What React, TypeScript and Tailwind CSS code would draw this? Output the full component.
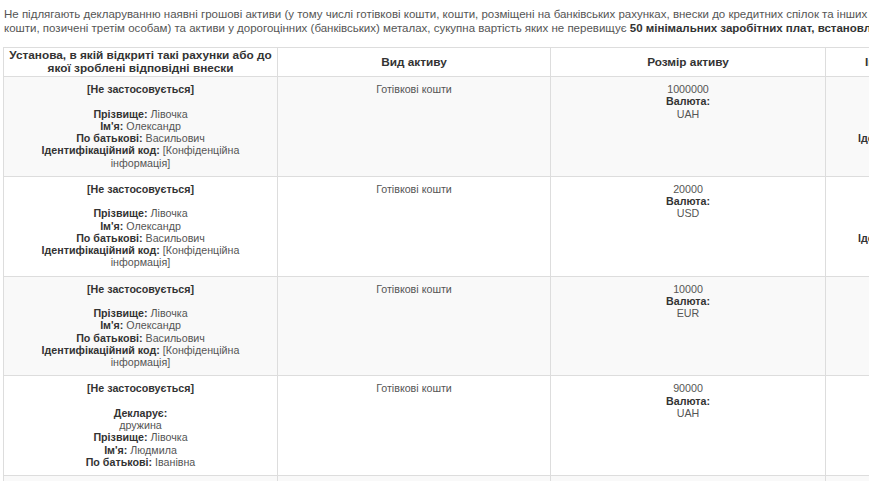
import React from 'react'

type Person = {
  declarant?: string
  surname: string
  name: string
  patronymic: string
  code?: boolean
}

type Row = {
  person: Person
  kind: string
  amount: string
  currency: string
  owner?: boolean
}

const ROWS: Row[] = [
  {
    person: { surname: 'Лівочка', name: 'Олександр', patronymic: 'Васильович', code: true },
    kind: 'Готівкові кошти',
    amount: '1000000',
    currency: 'UAH',
    owner: true,
  },
  {
    person: { surname: 'Лівочка', name: 'Олександр', patronymic: 'Васильович', code: true },
    kind: 'Готівкові кошти',
    amount: '20000',
    currency: 'USD',
    owner: true,
  },
  {
    person: { surname: 'Лівочка', name: 'Олександр', patronymic: 'Васильович', code: true },
    kind: 'Готівкові кошти',
    amount: '10000',
    currency: 'EUR',
  },
  {
    person: { declarant: 'дружина', surname: 'Лівочка', name: 'Людмила', patronymic: 'Іванівна' },
    kind: 'Готівкові кошти',
    amount: '90000',
    currency: 'UAH',
  },
  {
    person: { surname: 'Лівочка', name: 'Людмила', patronymic: 'Іванівна' },
    kind: 'Готівкові кошти',
    amount: '5000',
    currency: 'USD',
  },
]

const Label = ({ children }: { children: React.ReactNode }) => (
  <b className="font-bold text-[#333]">{children}</b>
)

const PersonCell = ({ p }: { p: Person }) => (
  <>
    <Label>[Не застосовується]</Label>
    <br />
    <br />
    {p.declarant && (
      <>
        <Label>Декларує:</Label>
        <br />
        {p.declarant}
        <br />
      </>
    )}
    <Label>Прізвище:</Label> {p.surname}
    <br />
    <Label>Ім'я:</Label> {p.name}
    <br />
    <Label>По батькові:</Label> {p.patronymic}
    {p.code && (
      <>
        <br />
        <Label>Ідентифікаційний код:</Label> [Конфіденційна інформація]
      </>
    )}
  </>
)

const OwnerCell = () => (
  <>
    <br />
    <br />
    <br />
    <br />
    <span className="whitespace-nowrap">
      <Label>Ідентифікаційний код:</Label> [Конфіденційна інформація]
    </span>
  </>
)

export default function App() {
  return (
    <div className="w-[869px] h-[481px] overflow-hidden bg-white font-['Liberation_Sans',Arial,sans-serif] text-[#555]">
      <div className="w-[1300px] pl-[3px]">
        <p className="mt-[7px] pl-[1px] text-[11.5px] leading-[14px] whitespace-nowrap">
          Не підлягають декларуванню наявні грошові активи (у тому числі готівкові кошти, кошти, розміщені на банківських
          рахунках, внески до кредитних спілок та інших небанківських фінансових установ,
          <br />
          кошти, позичені третім особам) та активи у дорогоцінних (банківських) металах, сукупна вартість яких не
          перевищує <b className="text-[#333]">50 мінімальних заробітних плат, встановлених на 1 січня звітного року</b>.
        </p>
        <table className="mt-[12px] table-fixed border-collapse text-center text-[10.7px] leading-[12.25px]">
          <colgroup>
            <col className="w-[274px]" />
            <col className="w-[273px]" />
            <col className="w-[275px]" />
            <col className="w-[400px]" />
          </colgroup>
          <thead>
            <tr className="bg-white text-[11.8px] leading-[13px] font-bold text-[#333]">
              <th className="border border-[#ddd] px-[3px] py-[1px]">
                Установа, в якій відкриті такі рахунки або до якої зроблені відповідні внески
              </th>
              <th className="border border-[#ddd] px-1 py-[1px]">Вид активу</th>
              <th className="border border-[#ddd] px-1 py-[1px]">Розмір активу</th>
              <th className="border border-[#ddd] pl-[39px] pr-1 py-[1px] text-left whitespace-nowrap">
                Інформація щодо третьої особи, на яку оформлено актив
              </th>
            </tr>
          </thead>
          <tbody>
            {ROWS.map((r, i) => (
              <tr key={i} className={i % 2 === 0 ? 'bg-[#f9f9f9]' : 'bg-white'}>
                <td className="border border-[#ddd] px-8 pt-[6px] pb-[7px] align-top">
                  <PersonCell p={r.person} />
                </td>
                <td className="border border-[#ddd] px-2 pt-[6px] pb-[7px] align-top">{r.kind}</td>
                <td className="border border-[#ddd] px-2 pt-[6px] pb-[7px] align-top">
                  {r.amount}
                  <br />
                  <Label>Валюта:</Label>
                  <br />
                  {r.currency}
                </td>
                <td className="border border-[#ddd] pl-[32px] pr-2 pt-[6px] pb-[7px] align-top text-left">
                  {r.owner ? <OwnerCell /> : null}
                </td>
              </tr>
            ))}
          </tbody>
        </table>
      </div>
    </div>
  )
}
